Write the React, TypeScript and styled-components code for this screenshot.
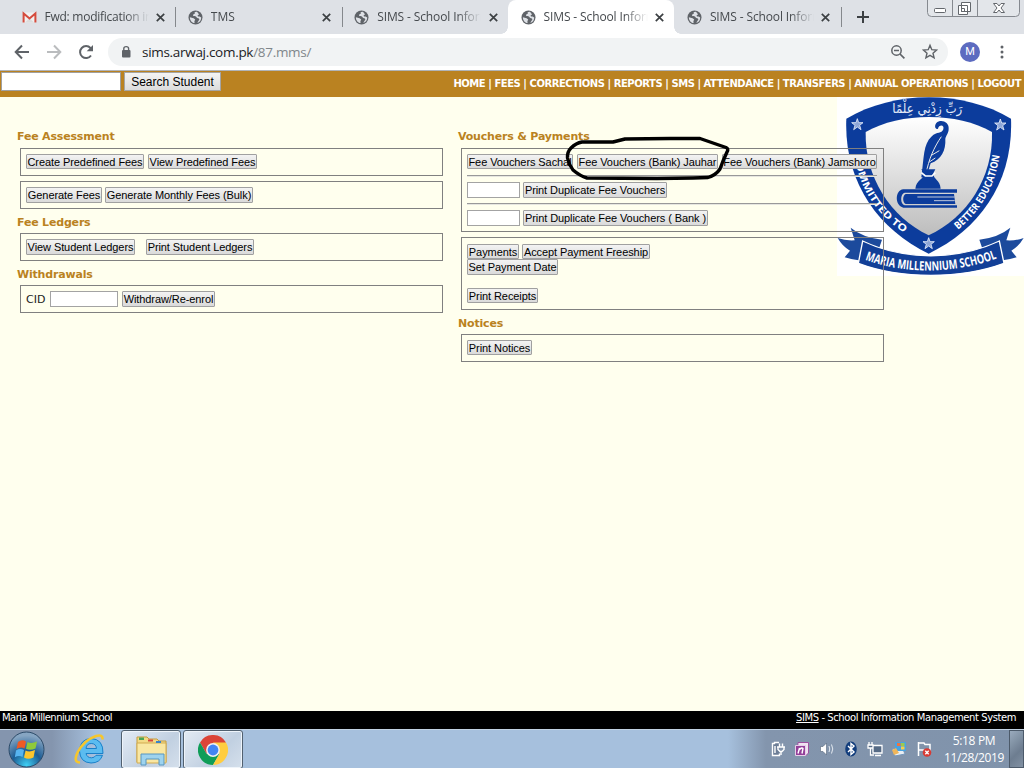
import React from 'react';
import styled, { createGlobalStyle, css } from 'styled-components';

const Global = createGlobalStyle`
  * { box-sizing: border-box; }
  html, body { margin: 0; padding: 0; }
  body { width: 1024px; height: 768px; overflow: hidden; background: #ffffee; }
`;

const ui = '"Open Sans", "Noto Sans", sans-serif';
const verdana = '"DejaVu Sans", Verdana, sans-serif';
const arial = '"Liberation Sans", Arial, sans-serif';

const Screen = styled.div`
  width: 1024px;
  height: 768px;
  display: flex;
  flex-direction: column;
  overflow: hidden;
`;

/* ---------- browser frame ---------- */

const TabStrip = styled.div`
  height: 34px;
  flex: none;
  display: flex;
  background: #dee1e6;
  padding-left: 9px;
`;

const Tab = styled.div<{ $active?: boolean; $line?: boolean }>`
  width: 166.35px;
  height: 34px;
  flex: none;
  display: flex;
  align-items: center;
  padding: 0 8px 0 12.5px;
  position: relative;
  ${p => p.$active && css`
    background: #fff;
    border-radius: 8px 8px 0 0;
    &::before, &::after {
      content: '';
      position: absolute;
      bottom: 0;
      width: 7px;
      height: 7px;
    }
    &::before { left: -7px; background: radial-gradient(circle at 0 0, transparent 6.5px, #fff 7px); }
    &::after { right: -7px; background: radial-gradient(circle at 100% 0, transparent 6.5px, #fff 7px); }
  `}
  ${p => p.$line && css`
    &::after {
      content: '';
      position: absolute;
      right: -1px;
      top: 7px;
      width: 1px;
      height: 20px;
      background: #85888c;
    }
  `}
`;

const TabTitle = styled.span<{ $ls?: number }>`
  flex: none;
  width: 104px;
  margin-left: 8px;
  overflow: hidden;
  white-space: nowrap;
  font: 12px/18px ${ui};
  letter-spacing: ${p => p.$ls ?? -0.12}px;
  color: #45494d;
  mask-image: linear-gradient(90deg, #000 80px, transparent 104px);
`;

const TabIcon = styled.svg`
  width: 15px;
  height: 15px;
  flex: none;
`;

const TabClose = styled.svg`
  width: 9px;
  height: 9px;
  flex: none;
  margin-left: 7.5px;
`;

const NewTab = styled.svg`
  width: 12px;
  height: 12px;
  margin: 11px 0 0 16px;
  flex: none;
`;

const WindowButtons = styled.svg`
  width: 94px;
  height: 18px;
  margin-left: 58px;
  flex: none;
`;

const Toolbar = styled.div`
  height: 37px;
  flex: none;
  display: flex;
  align-items: center;
  background: #fff;
  border-bottom: 1px solid #b1b4b8;
  padding: 0 14px;
`;

const ToolIcon = styled.svg<{ $w: number; $ml?: number }>`
  width: ${p => p.$w}px;
  height: 18px;
  flex: none;
  margin-left: ${p => p.$ml ?? 0}px;
`;

const Omnibox = styled.div`
  width: 840px;
  height: 28px;
  margin-left: 14px;
  border-radius: 14px;
  background: #f1f3f4;
  display: flex;
  align-items: center;
  padding-left: 12px;
`;

const Url = styled.span`
  width: 749px;
  flex: none;
  margin-left: 10px;
  font: 13.5px/20px ${ui};
  letter-spacing: -0.3px;
  color: #202124;
  white-space: nowrap;
  i { font-style: normal; color: #80868b; }
`;

const Avatar = styled.span`
  width: 20px;
  height: 20px;
  margin-left: 12px;
  border-radius: 50%;
  background: #5c6bc0;
  color: #fff;
  font: 11px/20px Roboto, sans-serif;
  text-align: center;
`;

/* ---------- site ---------- */

const SiteHeader = styled.header`
  height: 26px;
  flex: none;
  display: flex;
  justify-content: space-between;
  background: #ba8221;
  padding: 1px 3px 0 1px;
`;

const SearchForm = styled.div`
  display: flex;
  gap: 3px;
`;

const SearchInput = styled.input`
  width: 120px;
  height: 19px;
  border: 1px solid #a0a0a0;
  border-radius: 0;
  background: #fff;
  padding: 0;
`;

const SearchButton = styled.button`
  width: 97px;
  height: 19px;
  padding: 1px 0 0;
  border: 1px solid #a5a5a5;
  border-radius: 0;
  background: linear-gradient(#f4f4f4, #dcdcdc);
  font: 12px/16px ${arial};
  color: #000;
  white-space: nowrap;
`;

const Nav = styled.nav`
  font: bold 10px/23px ${verdana};
  color: #fff;
  white-space: nowrap;
  letter-spacing: -0.46px;
`;

const Page = styled.main`
  height: 614px;
  flex: none;
  position: relative;
  display: flex;
  background: #ffffee;
  padding: 31px 0 0 17px;
`;

const Crest = styled.svg`
  position: absolute;
  left: 837px;
  top: 0;
  width: 187px;
  height: 179px;
`;

const Scribble = styled.svg`
  position: absolute;
  left: 560px;
  top: 36px;
  width: 180px;
  height: 50px;
`;

const Column = styled.section`
  position: relative;
  width: 426px;
  margin-right: 15px;
`;

const Heading = styled.h2<{ $h?: number }>`
  margin: 0;
  height: ${p => p.$h ?? 24}px;
  font: bold 11px/18px ${verdana};
  letter-spacing: -0.18px;
  color: #ba8221;
  white-space: nowrap;
`;

const Panel = styled.div<{ $h?: number; $mb?: number; $pt?: number }>`
  height: ${p => p.$h ?? 28}px;
  margin: 0 0 ${p => p.$mb ?? 5}px 3px;
  width: 423px;
  border: 1px solid #808080;
  padding: ${p => p.$pt ?? 5}px 5px 0;
`;

const Row = styled.div<{ $gap?: number; $mt?: number }>`
  display: flex;
  gap: ${p => p.$gap ?? 4}px;
  margin-top: ${p => p.$mt ?? 0}px;
`;

const Btn = styled.button<{ $w: number; $h?: number; $ls?: number }>`
  width: ${p => p.$w}px;
  height: ${p => p.$h ?? 16}px;
  flex: none;
  padding: 0;
  border: 1px solid #a0a0a0;
  border-radius: 1px;
  background: linear-gradient(#f3f3f3, #dadada);
  font: 11px/15px ${arial};
  letter-spacing: ${p => p.$ls ?? -0.08}px;
  color: #000;
  white-space: nowrap;
  display: flex;
  align-items: flex-start;
  justify-content: center;
`;

const Field = styled.input<{ $w: number }>`
  width: ${p => p.$w}px;
  height: 16px;
  padding: 0;
  border: 1px solid #a3a3a3;
  border-radius: 0;
  background: #fff;
`;

const Label = styled.label`
  width: 20px;
  font: 11px/17px ${verdana};
  letter-spacing: 0;
  color: #222;
`;

const Rule = styled.div<{ $mt?: number }>`
  height: 2px;
  margin: ${p => p.$mt ?? 5}px 0 5px;
  width: 410px;
  background: linear-gradient(#999 50%, #e6e6e0 50%);
`;

const Footer = styled.footer`
  height: 18px;
  flex: none;
  display: flex;
  justify-content: space-between;
  padding: 0 8px 0 2px;
  background: #000;
  color: #fff;
  font: 10px/14px ${verdana};
  white-space: nowrap;
`;

const FootText = styled.span<{ $ls: number }>`
  letter-spacing: ${p => p.$ls}px;
`;

/* ---------- taskbar ---------- */

const Taskbar = styled.div`
  height: 39px;
  flex: none;
  display: flex;
  background: linear-gradient(90deg, #8495ae 0, #8495ae 52px, #a6c0dd 95px, #a6c0dd 728px, #8395ad 766px, #8093ab 1024px);
  border-top: 1px solid #c3d3e4;
`;

const StartArea = styled.div`
  width: 121px;
  display: flex;
  align-items: center;
  padding-left: 8px;
  gap: 29px;
`;

const TaskButton = styled.div<{ $w: number }>`
  width: ${p => p.$w}px;
  height: 39px;
  margin-right: 2px;
  display: flex;
  align-items: center;
  justify-content: center;
  border: 1px solid #51606f;
  border-radius: 3px;
  background: linear-gradient(135deg, #e3ebf4, #c1d0e1 60%, #d5e0ec);
  box-shadow: inset 0 0 0 1px #eef4fa;
`;

const Icon = styled.svg<{ $s: number }>`
  width: ${p => p.$s}px;
  height: ${p => p.$s}px;
  flex: none;
`;

const Tray = styled.div`
  margin-left: auto;
  width: 254px;
  display: flex;
  align-items: center;
`;

const TrayIcons = styled.div`
  display: flex;
  gap: 8.3px;
  width: 171px;
`;

const Clock = styled.div`
  width: 66px;
  font: 12px/17px ${ui};
  color: #fff;
  text-align: center;
  white-space: nowrap;
  letter-spacing: -0.35px;
`;

const ShowDesktop = styled.div`
  width: 15px;
  height: 38px;
  margin-left: auto;
  border: 1px solid #4c5a6a;
  background: linear-gradient(135deg, #9aabbd, #6d7d90 60%, #8291a3);
`;

const Globe = () => (
  <TabIcon viewBox="0 0 15 15">
    <circle cx="7.5" cy="7.5" r="7" fill="#5f6368" />
    <path d="M9 1.8C6.5 1.6 6 3 7 3.7 5.3 4 4.4 5 5.4 6.1 6.6 6.6 8.4 6 8.7 7.6 9.3 8.5 11 8 11.4 9.2L10.6 10.8 9.2 12.8C11.8 12.3 13.3 10 13.2 7.4L11.6 6.5 10 6.6 9.6 5.2 11 4.4 10.4 3.5ZM1.9 7.2 5.6 8.2 7.2 9.6 6.4 11.2 6.6 13.1C3.9 12.7 1.8 10.2 1.9 7.2Z" fill="#dee1e6" />
  </TabIcon>
);

const Close = () => (
  <TabClose viewBox="0 0 9 9"><path d="M.8.8 8.2 8.2M8.2.8.8 8.2" stroke="#3c4043" strokeWidth="1.7" /></TabClose>
);

const Gmail = () => (
  <TabIcon viewBox="0 0 15 15">
    <path d="M1 2.5h13v10H1z" fill="#f1f1f1" />
    <path d="M3 12.5 7.5 8l4.5 4.5z" fill="#dcdcdc" />
    <path d="M1.6 12.5V3.5L7.5 8.4 13.4 3.5V12.5" fill="none" stroke="#d54b3d" strokeWidth="2" />
  </TabIcon>
);

const starPath = 'M0-17 4-5 17-5 7 3 11 16 0 8-11 16-7 3-17-5-4-5Z';

const SchoolCrest = () => (
  <Crest viewBox="9 9 561 537" preserveAspectRatio="none">
    <defs>
      <linearGradient id="field" x1="0" y1="0" x2="0" y2="1">
        <stop offset="0" stopColor="#fff" /><stop offset="1" stopColor="#bdbdbd" />
      </linearGradient>
      <path id="leftBand" d="M60 184C74 270 120 365 226 425" />
      <path id="rightBand" d="M372 407C442 350 488 270 498 172" />
      <path id="motto" d="M93 497C210 541 360 541 494 491" />
    </defs>
    <rect x="9" y="9" width="561" height="537" fill="#fff" />
    <path d="M37 74C180-12 390-12 531 74 539 260 440 405 284 479 130 405 29 260 37 74Z" fill="#0c3c9c" />
    <path d="M95 114C200 54 370 54 474 114 478 250 400 370 284 424 170 370 92 250 95 114Z" fill="url(#field)" />
    {[[70, 91], [499, 92], [284, 448]].map(([x, y]) => (
      <path key={x} d={starPath} transform={`translate(${x} ${y})`} fill="#8ea6d6" stroke="#e8eefa" strokeWidth="2.500" />
    ))}
    <text x="280" y="57" textAnchor="middle" fontFamily="DejaVu Sans, sans-serif" fontSize="38" fill="#e4ebf8" textLength="210" lengthAdjust="spacingAndGlyphs">رَبِّ زِدْنِي عِلْمًا</text>
    <g fill="#fff" fontFamily="Open Sans, sans-serif" fontWeight="bold">
      <text fontSize="29" textLength="286" lengthAdjust="spacingAndGlyphs"><textPath href="#leftBand">COMMITTED TO</textPath></text>
      <text fontSize="31" textLength="262" lengthAdjust="spacingAndGlyphs"><textPath href="#rightBand">BETTER EDUCATION</textPath></text>
    </g>
    <path d="M262 250C270 190 268 150 292 128 310 110 322 122 328 106 332 90 314 92 312 104 304 108 300 96 307 87 320 74 346 84 344 104 344 118 336 124 334 134 336 170 322 196 290 208L276 252Z" fill="#0c3c9c" />
    <path d="M276 240C284 196 300 160 322 128M286 204 304 192M292 184 316 170" fill="none" stroke="#e8e8e8" strokeWidth="3" />
    <path d="M262 226H304L298 238C298 258 318 256 320 284H244C248 256 268 258 270 240Z" fill="#0c3c9c" />
    <path d="M262 236 274 246H294L304 236" fill="none" stroke="#fff" strokeWidth="5" />
    <path d="M369 286H208C182 288 182 336 208 341H369V334H212C198 330 198 300 212 296H369Z" fill="#0c3c9c" />
    <path d="M215 300H360L364 330H215C205 325 205 305 215 300Z" fill="#0c3c9c" />
    <path d="M250 309H362M300 320H362" stroke="#bfc8dc" strokeWidth="3" />
    <path d="M50 401Q85 430 144 437L122 502Q70 502 32 490L48 470Q26 458 11 432 36 441 62 439Z" fill="#1c4a9c" />
    <path d="M529 401Q494 430 436 437L458 502Q510 502 548 490L532 470Q554 458 569 432 544 441 517 439Z" fill="#1c4a9c" />
    <path d="M86 441C210 500 370 500 496 441L510 508C380 556 200 556 73 508Z" fill="#123f97" stroke="#fff" strokeWidth="4" />
    <text fill="#fff" fontFamily="Open Sans, sans-serif" fontWeight="bold" fontSize="38" textLength="404" lengthAdjust="spacingAndGlyphs"><textPath href="#motto">MARIA MILLENNIUM SCHOOL</textPath></text>
  </Crest>
);

export default function App() {
  return (
    <Screen>
      <Global />
      <TabStrip>
        <Tab $line><Gmail /><TabTitle $ls={-0.25}>Fwd: modification in</TabTitle><Close /></Tab>
        <Tab $line><Globe /><TabTitle $ls={0}>TMS</TabTitle><Close /></Tab>
        <Tab><Globe /><TabTitle>SIMS - School Inform</TabTitle><Close /></Tab>
        <Tab $active><Globe /><TabTitle>SIMS - School Inform</TabTitle><Close /></Tab>
        <Tab $line><Globe /><TabTitle>SIMS - School Inform</TabTitle><Close /></Tab>
        <NewTab viewBox="0 0 12 12"><path d="M6 0V12M0 6H12" stroke="#3c4043" strokeWidth="2" /></NewTab>
        <WindowButtons viewBox="0 0 94 18">
          <path d="M.5-1V12.500Q.5 16.500 4.500 16.500H88.500Q92.500 16.500 92.500 12.500V-1M25.500 0V16M50.500 0V16" fill="#e3e6ea" stroke="#85898f" />
          <rect x="7.500" y="8.500" width="11" height="4" rx="1" fill="#fff" stroke="#63676c" />
          <path d="M34.500 2.500H43.500V11.500H34.500ZM31.500 5.500H40.500V14.500H31.500ZM34.500 8.500H37.500V11.500H34.500Z" fill="#fff" stroke="#63676c" />
          <path d="M66.500 3.500H70L72 6 74 3.500H77.500L74 8 77.500 12.500H74L72 10 70 12.500H66.500L70 8Z" fill="#fff" stroke="#63676c" />
        </WindowButtons>
      </TabStrip>
      <Toolbar>
        <ToolIcon $w={16} viewBox="0 0 16 18"><path d="M15 9H2M8 2.500 1.700 9 8 15.500" fill="none" stroke="#5f6368" strokeWidth="2" /></ToolIcon>
        <ToolIcon $w={16} $ml={16} viewBox="0 0 16 18"><path d="M1 9H14M8 2.500 14.300 9 8 15.500" fill="none" stroke="#babcbe" strokeWidth="2" /></ToolIcon>
        <ToolIcon $w={16} $ml={16} viewBox="0 0 16 18"><path d="M13 12.500A6 6 0 1 1 12.500 5L14 6.500" fill="none" stroke="#5f6368" strokeWidth="2" /><path d="M15 2V8.300H8.700Z" fill="#5f6368" /></ToolIcon>
        <Omnibox>
          <ToolIcon $w={12} viewBox="0 0 12 18"><rect x="2" y="7" width="8.500" height="7.500" rx="1" fill="#5f6368" /><path d="M3.800 7.500V5.500Q3.800 3.600 6.200 3.600T8.600 5.500V7.500" fill="none" stroke="#5f6368" strokeWidth="1.400" /></ToolIcon>
          <Url>sims.arwaj.com.pk<i>/87.mms/</i></Url>
          <ToolIcon $w={14} viewBox="0 0 14 18"><circle cx="5.500" cy="7.500" r="4.700" fill="none" stroke="#5f6368" strokeWidth="1.500" /><path d="M3 7.500H8M9 11 13.400 15.400" stroke="#5f6368" strokeWidth="1.700" /></ToolIcon>
          <ToolIcon $w={16} $ml={17} viewBox="0 0 16 18"><path d="M8 2.300 9.800 6.700 14.600 7.100 11 10.200 12.100 14.900 8 12.400 3.900 14.900 5 10.200 1.400 7.100 6.200 6.700Z" fill="none" stroke="#5f6368" strokeWidth="1.400" /></ToolIcon>
        </Omnibox>
        <Avatar>M</Avatar>
        <ToolIcon $w={4} $ml={20} viewBox="0 0 4 18"><circle cx="2" cy="4" r="1.500" fill="#5f6368" /><circle cx="2" cy="9" r="1.500" fill="#5f6368" /><circle cx="2" cy="14" r="1.500" fill="#5f6368" /></ToolIcon>
      </Toolbar>

      <SiteHeader>
        <SearchForm><SearchInput /><SearchButton>Search Student</SearchButton></SearchForm>
        <Nav>HOME | FEES | CORRECTIONS | REPORTS | SMS | ATTENDANCE | TRANSFERS | ANNUAL OPERATIONS | LOGOUT</Nav>
      </SiteHeader>

      <Page>
        <SchoolCrest />
        <Column>
          <Heading $h={20}>Fee Assessment</Heading>
          <Panel><Row><Btn $w={118} $h={15}>Create Predefined Fees</Btn><Btn $w={109} $h={15}>View Predefined Fees</Btn></Row></Panel>
          <Panel><Row $gap={3}><Btn $w={76}>Generate Fees</Btn><Btn $w={148}>Generate Monthly Fees (Bulk)</Btn></Row></Panel>
          <Heading $h={19}>Fee Ledgers</Heading>
          <Panel><Row $gap={11}><Btn $w={109}>View Student Ledgers</Btn><Btn $w={108}>Print Student Ledgers</Btn></Row></Panel>
          <Heading $h={19}>Withdrawals</Heading>
          <Panel><Row><Label>CID</Label><Field $w={68} /><Btn $w={93}>Withdraw/Re-enrol</Btn></Row></Panel>
        </Column>
        <Column>
          <Heading $h={20}>Vouchers &amp; Payments</Heading>
          <Panel $h={84}>
            <Row><Btn $w={106} $h={15}>Fee Vouchers Sachal</Btn><Btn $w={141} $h={15}>Fee Vouchers (Bank) Jauhar</Btn><Btn $w={155} $h={15}>Fee Vouchers (Bank) Jamshoro</Btn></Row>
            <Rule $mt={6} />
            <Row $gap={3}><Field $w={53} /><Btn $w={144}>Print Duplicate Fee Vouchers</Btn></Row>
            <Rule />
            <Row $gap={3}><Field $w={53} /><Btn $w={185}>Print Duplicate Fee Vouchers ( Bank )</Btn></Row>
          </Panel>
          <Panel $h={73} $pt={6}>
            <Row $gap={3}><Btn $w={52} $h={15}>Payments</Btn><Btn $w={128} $h={15}>Accept Payment Freeship</Btn></Row>
            <Row><Btn $w={91}>Set Payment Date</Btn></Row>
            <Row $mt={13}><Btn $w={71} $h={15}>Print Receipts</Btn></Row>
          </Panel>
          <Heading $h={19}>Notices</Heading>
          <Panel><Row><Btn $w={65} $h={15}>Print Notices</Btn></Row></Panel>
        </Column>
        <Scribble viewBox="560 133 180 50">
          <path d="M670 138.500 625 139 613 142 582 142Q576 143 571 148 567 152 567.500 158 569 165 573 170 580 176 587 178L657 178.500 693 178 708 177.500Q716 175 720 169L723 161 727 152Q729 149 726 147.500L713 143 700 138.500Z" fill="none" stroke="#000" strokeWidth="3.400" strokeLinejoin="round" />
        </Scribble>
      </Page>

      <Footer><FootText $ls={-0.52}>Maria Millennium School</FootText><FootText $ls={-0.42}><u>SIMS</u> - School Information Management System</FootText></Footer>

      <Taskbar>
        <StartArea>
          <Icon $s={37} viewBox="0 0 37 37">
            <defs><radialGradient id="orb" cx=".5" cy=".95" r=".85"><stop offset="0" stopColor="#3fd0f5" /><stop offset=".5" stopColor="#1c5c94" /><stop offset="1" stopColor="#86a5c2" /></radialGradient></defs>
            <circle cx="18.500" cy="18.500" r="17.500" fill="url(#orb)" stroke="#2c4a68" />
            <path d="M10 11Q14 8 18 10.500L16.500 17.500Q13 15.500 8.500 18Z" fill="#ee5a24" />
            <path d="M19.500 11Q23.500 13 29 10.500L27.500 17.500Q22 20 18 17.800Z" fill="#8fc93a" />
            <path d="M8 19.500Q12 17 16 19L14.500 26Q11 24 6.800 26.300Z" fill="#57b4f0" />
            <path d="M17.600 19.500Q21.500 21.500 27 19L25.500 26.500Q20 29 16 26.500Z" fill="#fdc52d" />
          </Icon>
          <Icon $s={32} viewBox="0 0 32 32">
            <path d="M29 20.500H12Q13 24.800 17.500 24.800 20.500 24.800 22 22.300H28.500Q26 30 17 30 6 29.500 5.500 18 6 6 17 5.500 29.500 6 29 20.500ZM12 15.500H22.500Q22 10.500 17.200 10.500 12.500 10.500 12 15.500Z" fill="#5bbcf0" stroke="#1980c9" strokeWidth="1" />
            <path d="M6 29.500Q-1 29.500 3.500 19.500 10 7 22 3 29 1 28.500 6.500" fill="none" stroke="#f6c62c" strokeWidth="2.600" />
          </Icon>
        </StartArea>
        <TaskButton $w={60}>
          <Icon $s={34} viewBox="0 0 34 34">
            <path d="M3 4H13L15 6H23L25 8H32V29H3Z" fill="#f3da85" stroke="#c59c3e" />
            <path d="M3 10H32V30H3Z" fill="#f9e7a3" stroke="#d1ab50" />
            <path d="M5 4.500H10V7H5Z" fill="#4aa657" /><path d="M14 6.500H19V8.500H14Z" fill="#d6473d" /><path d="M22 8H27V10H22Z" fill="#3a83c9" />
            <path d="M7 32V21H30V32H25V26H12V32Z" fill="#9ed3ee" stroke="#5796c0" />
          </Icon>
        </TaskButton>
        <TaskButton $w={60}>
          <Icon $s={30} viewBox="0 0 30 30">
            <path d="M2 7.500A15 15 0 0 1 28 7.500L15 15 8.500 18.750Z" fill="#db4437" />
            <path d="M2 7.500A15 15 0 0 0 15 30L21.500 18.750H8.500Z" fill="#0f9d58" />
            <path d="M28 7.500A15 15 0 0 1 15 30L21.500 18.750 15 7.500Z" fill="#ffcd40" />
            <circle cx="15" cy="15" r="6.900" fill="#f1f1f1" /><circle cx="15" cy="15" r="5.400" fill="#4285f4" />
          </Icon>
        </TaskButton>
        <Tray>
          <TrayIcons>
            <Icon $s={16} viewBox="0 0 16 16"><path d="M9 1.500H4.500V2.500H2.500V14.500H9.500V12.500" fill="#6c7d96" stroke="#fff" strokeWidth="1.400" /><path d="M5 5V12M9.500 2.500V5.500M12.500 2.500V5.500M7 6H15M8 6V8.500L10 10.500H12L14 8.500V6M11 10V14" fill="none" stroke="#fff" strokeWidth="1.400" /></Icon>
            <Icon $s={16} viewBox="0 0 16 16"><path d="M4 1.500H14.500V12L12 14.500H3Z" fill="#efe2f1" stroke="#9c4fa0" /><path d="M1.500 4.500H11.500V14.500H1.500Z" fill="#94409a" stroke="#e7cfe9" /><path d="M4 12.500 5.500 7V8.500Q8 6 9 7.500L8 12.500" fill="none" stroke="#fff" strokeWidth="1.400" /></Icon>
            <Icon $s={16} viewBox="0 0 16 16"><path d="M1.500 5.500H4L7.500 2V14L4 10.500H1.500Z" fill="#fff" stroke="#54657a" strokeWidth=".6" /><path d="M10 5Q11.500 8 10 11M12.500 3.500Q15 8 12.500 12.500" fill="none" stroke="#e4eaf1" /></Icon>
            <Icon $s={16} viewBox="0 0 16 16"><ellipse cx="8" cy="8" rx="5.800" ry="7.500" fill="#123d7c" /><path d="M5 5 11 11 8 13.500V2.500L11 5 5 11" fill="none" stroke="#fff" strokeWidth="1.400" /></Icon>
            <Icon $s={16} viewBox="0 0 16 16"><path d="M6 4.500H15V12H6ZM8 14.500H14M2 1V4M5 1V4M1 4H6V7H1ZM3.500 7V14H7" fill="#556a85" stroke="#fff" strokeWidth="1.300" /></Icon>
            <Icon $s={16} viewBox="0 0 16 16"><path d="M1 8 11 6 14 13 4 15Z" fill="#e9eef3" stroke="#7597bb" /><path d="M4 1H15V10H4Z" fill="#4aa3e0" /><path d="M6 2H9.500V5H6Z" fill="#ee7340" /><path d="M10 2H13.500V5H10Z" fill="#9ccb4d" /><path d="M10 5.500H13.500V8.500H10Z" fill="#f9cf49" /><path d="M1 9 5 7 8 12 3 14Z" fill="#f0b65a" /></Icon>
            <Icon $s={16} viewBox="0 0 16 16"><path d="M2.500 1V15M3 2H8L9 3.500H14V9H3" fill="#8194ab" stroke="#fff" strokeWidth="1.500" /><circle cx="11" cy="11.500" r="4.300" fill="#d83a34" /><path d="M9.300 9.800 12.700 13.200M12.700 9.800 9.300 13.200" stroke="#fff" strokeWidth="1.400" /></Icon>
          </TrayIcons>
          <Clock>5:18 PM<br />11/28/2019</Clock>
          <ShowDesktop />
        </Tray>
      </Taskbar>
    </Screen>
  );
}
